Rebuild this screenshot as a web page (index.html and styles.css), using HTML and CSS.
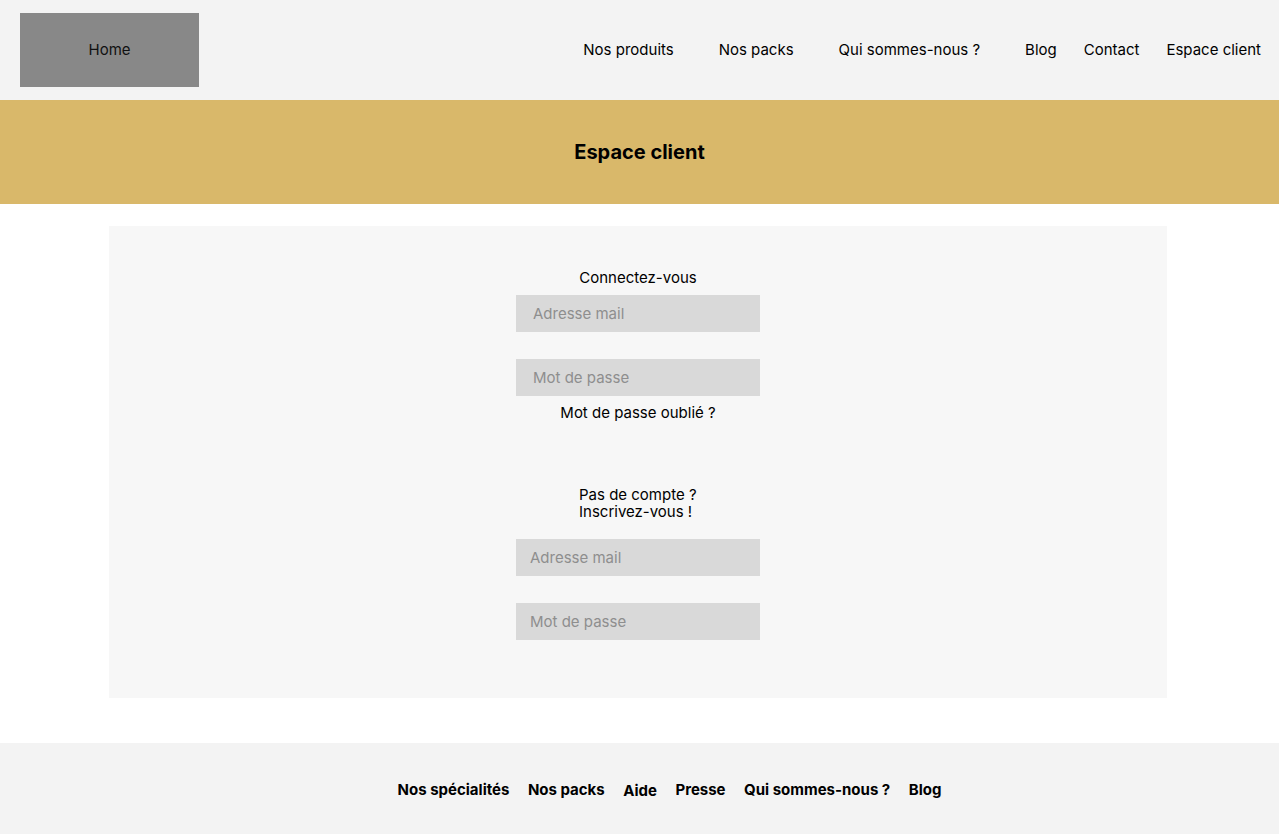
FILE: index.html
```html
<!DOCTYPE html>
<html lang="fr">
<head>
<meta charset="utf-8">
<title>Espace client</title>
<link rel="stylesheet" href="styles.css">
</head>
<body>
<header class="topbar">
  <a class="home" href="#">Home</a>
  <nav class="mainnav">
    <a class="nav-wide" href="#">Nos produits</a>
    <a class="nav-wide" href="#">Nos packs</a>
    <a class="nav-wide" href="#">Qui sommes-nous ?</a>
    <a href="#">Blog</a>
    <a href="#">Contact</a>
    <a href="#">Espace client</a>
  </nav>
</header>
<section class="banner"><h1>Espace client</h1></section>
<main class="panel">
  <form class="form">
    <p class="label">Connectez-vous</p>
    <input class="field field-a" type="email" placeholder="Adresse mail">
    <input class="field field-a gap" type="password" placeholder="Mot de passe">
    <p class="forgot">Mot de passe oublié ?</p>
    <p class="signup">Pas de compte ?<br>Inscrivez-vous !</p>
    <input class="field field-b" type="email" placeholder="Adresse mail">
    <input class="field field-b gap" type="password" placeholder="Mot de passe">
  </form>
</main>
<footer class="footer">
  <nav class="footnav">
    <a href="#">Nos spécialités</a>
    <a href="#">Nos packs</a>
    <a class="low" href="#">Aide</a>
    <a href="#">Presse</a>
    <a href="#">Qui sommes-nous ?</a>
    <a href="#">Blog</a>
  </nav>
</footer>
</body>
</html>
```
FILE: styles.css
```css
* { box-sizing: border-box; }
html, body { margin: 0; padding: 0; }
body {
  font-family: Inter, "Noto Sans", sans-serif;
  color: #000;
  background: #fff;
  width: 1279px;
}
a { color: inherit; text-decoration: none; }
p { margin: 0; }

.topbar {
  height: 100px;
  background: #f3f3f3;
  display: flex;
  align-items: center;
  justify-content: space-between;
  padding: 0 18px 2px 20px;
}
.home {
  width: 179px;
  height: 74px;
  background: #888888;
  display: flex;
  align-items: center;
  justify-content: center;
  font-size: 15px;
  color: #111;
  margin-top: 2px;
  padding-bottom: 2px;
}
.mainnav {
  display: flex;
  align-items: center;
  font-size: 15px;
  gap: 27px;
}
.mainnav .nav-wide { margin-right: 18px; }

.banner {
  height: 104px;
  background: #d9b86a;
  display: flex;
  align-items: center;
  justify-content: center;
}
.banner h1 {
  margin: 0;
  font-size: 20px;
  font-weight: 700;
}

.panel {
  margin: 22px 112px 45px 109px;
  background: #f7f7f7;
  padding: 43px 0 58px;
  display: flex;
  justify-content: center;
}
.form {
  width: 244px;
  display: flex;
  flex-direction: column;
  align-items: center;
  font-size: 15px;
  line-height: 17px;
}
.label { margin-bottom: 9px; text-align: center; }
.field {
  width: 244px;
  height: 37px;
  border: none;
  background: #d9d9d9;
  font-family: Inter, "Noto Sans", sans-serif;
  font-size: 15px;
  color: #333;
  padding: 0 0 0 17px;
  outline: none;
}
.field-b { padding-left: 14px; }
.field::placeholder { color: #8e8e8e; }
.gap { margin-top: 27px; }
.forgot { margin-top: 8px; text-align: center; }
.signup {
  align-self: flex-start;
  margin: 65px 0 19px 63px;
}

.footer {
  height: 91px;
  background: #f3f3f3;
  display: flex;
  align-items: center;
  justify-content: center;
  padding: 2px 0 0 60px;
}
.footnav {
  display: flex;
  align-items: center;
  gap: 18.5px;
  font-size: 15px;
  font-weight: 700;
}
.footnav .low { position: relative; top: 1px; }
```
